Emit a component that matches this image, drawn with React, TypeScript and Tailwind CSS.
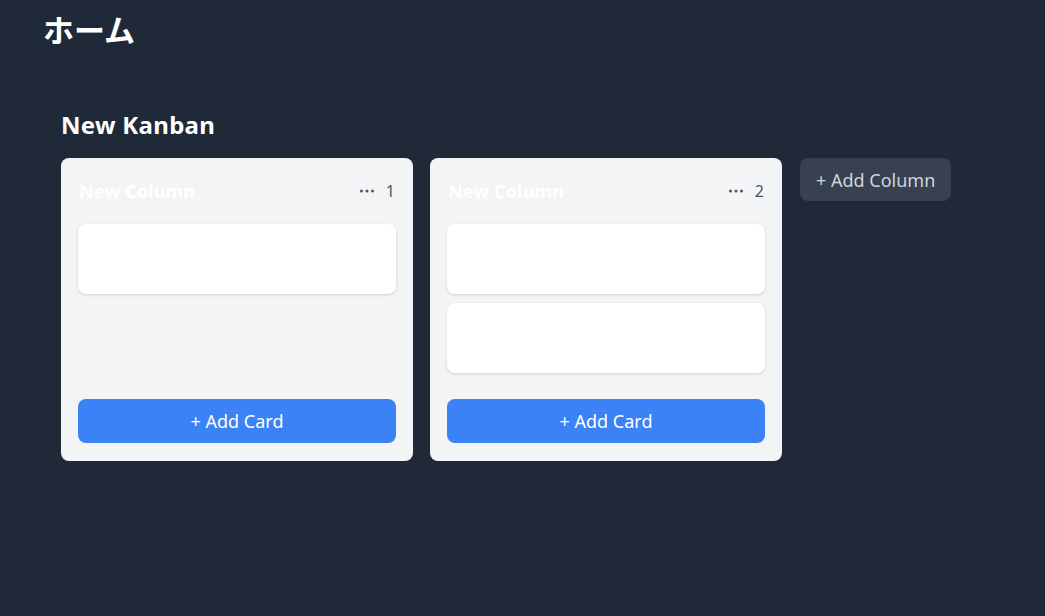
import { useState } from 'react';

type Column = { id: number; title: string; cards: number[] };

function KanbanColumn({ column }: { column: Column }) {
  return (
    <div className="w-[352px] flex flex-col bg-[#f3f4f6] rounded-lg pt-4 px-[17px] pb-[18px]">
      <div className="flex items-center justify-between h-[34px] mb-4">
        <h3 className="text-lg font-bold text-white pl-[1px] tracking-[0.2px]">{column.title}</h3>
        <div className="flex items-center gap-[11px] pr-[1px]">
          <svg width="16" height="4" viewBox="0 0 16 4" className="text-[#4b5563]">
            <circle cx="2.5" cy="2" r="1.5" fill="currentColor" />
            <circle cx="8" cy="2" r="1.5" fill="currentColor" />
            <circle cx="13.5" cy="2" r="1.5" fill="currentColor" />
          </svg>
          <span className="text-base text-[#4b5563]">{column.cards.length}</span>
        </div>
      </div>
      <div className="flex-1 flex flex-col gap-[9px]">
        {column.cards.map(id => (
          <div key={id} className="h-[70px] bg-white rounded-lg shadow-[0_1px_3px_rgba(0,0,0,0.15)]"></div>
        ))}
      </div>
      <button className="mt-[26px] h-[44px] w-full bg-[#3b82f6] text-white text-lg rounded-lg">
        + Add Card
      </button>
    </div>
  );
}

export default function App() {
  const [columns] = useState<Column[]>([
    { id: 1, title: 'New Column', cards: [1] },
    { id: 2, title: 'New Column', cards: [1, 2] },
  ]);

  return (
    <div className="min-h-[616px] w-full bg-[#1f2937] font-['Segoe_UI','Noto_Sans','Noto_Sans_CJK_JP',sans-serif]">
      <div className="pl-[43px] pt-[7px]">
        <h1 className="text-[31px] leading-[43px] font-bold text-white font-['Noto_Sans_CJK_JP',sans-serif]">ホーム</h1>
      </div>
      <div className="pl-[61px] pt-[59px]">
        <h2 className="text-2xl font-bold text-white leading-8 tracking-[0.3px]">New Kanban</h2>
        <div className="flex items-stretch mt-[17px] gap-[17px]">
          {columns.map(col => (
            <KanbanColumn key={col.id} column={col} />
          ))}
          <div className="pl-[1px]">
            <button className="h-[43px] px-[16px] bg-[#374151] text-[#d1d5db] text-lg rounded-lg whitespace-nowrap">
              + Add Column
            </button>
          </div>
        </div>
      </div>
    </div>
  );
}
